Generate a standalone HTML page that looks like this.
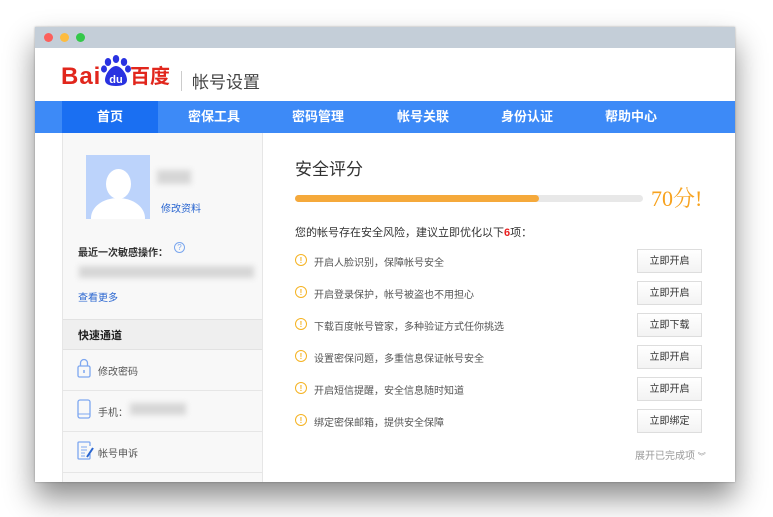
<!DOCTYPE html>
<html><head><meta charset="utf-8"><style>
*{margin:0;padding:0;box-sizing:border-box}
body{width:773px;height:517px;background:#fff;position:relative;overflow:hidden;font-family:"Liberation Sans","Noto Sans CJK SC",sans-serif;color:#333}
.a{position:absolute;white-space:nowrap}
#win{position:absolute;left:35px;top:27px;width:700px;height:455px;background:#fff;box-shadow:0 16px 28px rgba(0,0,0,.45),0 0 2px rgba(0,0,0,.3);overflow:hidden}
.dot{position:absolute;top:6px;width:9px;height:9px;border-radius:50%}
.nav{position:absolute;top:74px;left:0;width:700px;height:32px;background:#3d8af7}
.nav span{position:absolute;top:0;height:32px;line-height:32px;width:104px;text-align:center;color:#fff;font-size:13px;font-weight:bold}
.row{position:absolute;left:260px;width:420px;height:24px}
.ic{position:absolute;left:0;top:5px;width:12px;height:12px;border:1.5px solid #f5b323;border-radius:50%;color:#f5b323;font-size:8px;display:flex;align-items:center;justify-content:center;font-weight:bold}
.rt{position:absolute;left:19px;top:5px;font-size:10px;color:#555}
.btn{position:absolute;left:342px;top:0;width:65px;height:24px;border:1px solid #ddd;background:linear-gradient(#fff,#f3f3f3);font-size:10px;color:#333;text-align:center;line-height:23px}
.qi{position:absolute;left:27px;width:200px;height:41px;border-bottom:1px solid #e6e6e6}
</style></head><body>
<div id="win">
<div class="a" style="left:0;top:0;width:700px;height:21px;background:#c4ced8"></div>
<div class="dot" style="left:9px;background:#fc605c"></div>
<div class="dot" style="left:25px;background:#fdbc40"></div>
<div class="dot" style="left:41px;background:#34c84a"></div>
<!-- logo -->
<div class="a" style="left:26px;top:36px;font-size:24px;font-weight:bold;color:#e1261c;letter-spacing:1px">Bai</div>
<svg class="a" style="left:64px;top:27px" width="34" height="34" viewBox="0 0 34 34">
<ellipse cx="9" cy="8" rx="3.2" ry="4" fill="#2932e1"/><ellipse cx="17" cy="5" rx="3.2" ry="4" fill="#2932e1"/>
<ellipse cx="25" cy="8" rx="3.2" ry="4" fill="#2932e1"/><ellipse cx="29" cy="15" rx="3" ry="3.6" fill="#2932e1"/>
<ellipse cx="5" cy="15" rx="3" ry="3.6" fill="#2932e1"/>
<path d="M17 12c-5 0-11 8-11 14 0 4 4 6 11 6s11-2 11-6c0-6-6-14-11-14z" fill="#2932e1"/>
<text x="17" y="29" font-size="11" font-weight="bold" fill="#fff" text-anchor="middle" font-family="Liberation Sans">du</text>
</svg>
<div class="a" style="left:95px;top:39px;font-size:20px;font-weight:bold;color:#e1261c;line-height:22px">百度</div>
<div class="a" style="left:146px;top:44px;width:1px;height:20px;background:#ccc"></div>
<div class="a" style="left:157px;top:41px;font-size:17px;color:#444">帐号设置</div>
<div class="nav">
<span style="left:27px;width:96px;background:#1a6ff2">首页</span>
<span style="left:127px">密保工具</span>
<span style="left:231px">密码管理</span>
<span style="left:336px">帐号关联</span>
<span style="left:440px">身份认证</span>
<span style="left:544px">帮助中心</span>
</div>
<!-- sidebar -->
<div class="a" style="left:27px;top:106px;width:201px;height:360px;background:#f8f8f8;border-left:1px solid #e6e6e6;border-right:1px solid #e6e6e6"></div>
<div class="a" style="left:51px;top:128px;width:64px;height:64px;background:#bcd3fb;overflow:hidden">
<div class="a" style="left:20px;top:14px;width:25px;height:30px;border-radius:50%;background:#fff"></div>
<div class="a" style="left:5px;top:43px;width:54px;height:40px;border-radius:50%;background:#fff"></div>
</div>
<div class="a" style="left:122px;top:143px;width:34px;height:14px;background:#d6d6d6;filter:blur(3px)"></div>
<div class="a" style="left:126px;top:173px;font-size:10px;color:#2a66d0">修改资料</div>
<div class="a" style="left:43px;top:217px;font-size:10px;font-weight:bold;color:#333">最近一次敏感操作：</div>
<div class="a" style="left:139px;top:215px;width:11px;height:11px;border:1px solid #7aa6ee;border-radius:50%;font-size:8px;color:#7aa6ee;text-align:center;line-height:9px">?</div>
<div class="a" style="left:44px;top:239px;width:175px;height:12px;background:#d6d6d6;filter:blur(3px)"></div>
<div class="a" style="left:43px;top:262px;font-size:10px;color:#2a66d0">查看更多</div>
<div class="a" style="left:28px;top:292px;width:199px;height:31px;background:#efefef;border-top:1px solid #e2e2e2;border-bottom:1px solid #e2e2e2"></div>
<div class="a" style="left:43px;top:300px;font-size:11px;font-weight:bold;color:#222">快速通道</div>
<div class="qi" style="top:323px;left:28px;width:199px"></div>
<div class="qi" style="top:364px;left:28px;width:199px"></div>
<div class="qi" style="top:405px;left:28px;width:199px"></div>
<svg class="a" style="left:42px;top:331px" width="14" height="20" viewBox="0 0 14 20"><path d="M3.5 8V5a3.5 3.5 0 0 1 7 0v3" fill="none" stroke="#7ea7f0" stroke-width="1.3"/><rect x="1" y="8" width="12" height="11" rx="1.5" fill="none" stroke="#7ea7f0" stroke-width="1.3"/><path d="M7 12v3" stroke="#7ea7f0" stroke-width="1.5"/></svg>
<div class="a" style="left:63px;top:336px;font-size:10px;color:#555">修改密码</div>
<svg class="a" style="left:42px;top:372px" width="14" height="20" viewBox="0 0 14 20"><rect x="1" y="1" width="12" height="18" rx="2" fill="none" stroke="#7ea7f0" stroke-width="1.3"/><path d="M1 15h12" stroke="#7ea7f0" stroke-width="1"/></svg>
<div class="a" style="left:63px;top:377px;font-size:10px;color:#555">手机：</div>
<div class="a" style="left:95px;top:376px;width:56px;height:12px;background:#d6d6d6;filter:blur(3px)"></div>
<svg class="a" style="left:42px;top:414px" width="18" height="19" viewBox="0 0 18 19"><path d="M13 5V2a1 1 0 0 0-1-1H2a1 1 0 0 0-1 1v15a1 1 0 0 0 1 1h10a1 1 0 0 0 1-1v-4" fill="none" stroke="#7ea7f0" stroke-width="1.3"/><path d="M4 6h6M4 9h6M4 12h4M4 15h4" stroke="#7ea7f0" stroke-width="1.1"/><path d="M10 16l6-9" stroke="#2a66d0" stroke-width="2"/></svg>
<div class="a" style="left:63px;top:418px;font-size:10px;color:#555">帐号申诉</div>
<!-- content -->
<div class="a" style="left:260px;top:128px;font-size:17px;color:#333">安全评分</div>
<div class="a" style="left:260px;top:168px;width:348px;height:7px;border-radius:4px;background:#e8e8e8"></div>
<div class="a" style="left:260px;top:168px;width:244px;height:7px;border-radius:4px;background:#f5a93b"></div>
<div class="a" style="left:616px;top:155px;font-size:22px;color:#f7a21e;font-family:'Liberation Serif','Noto Serif CJK SC',serif">70分!</div>
<div class="a" style="left:260px;top:197px;font-size:11px;color:#333">您的帐号存在安全风险，建议立即优化以下<b style="color:#e81f1f">6</b>项：</div>
<div class="row" style="top:222px"><div class="ic">!</div><div class="rt">开启人脸识别，保障帐号安全</div><div class="btn">立即开启</div></div>
<div class="row" style="top:254px"><div class="ic">!</div><div class="rt">开启登录保护，帐号被盗也不用担心</div><div class="btn">立即开启</div></div>
<div class="row" style="top:286px"><div class="ic">!</div><div class="rt">下载百度帐号管家，多种验证方式任你挑选</div><div class="btn">立即下载</div></div>
<div class="row" style="top:318px"><div class="ic">!</div><div class="rt">设置密保问题，多重信息保证帐号安全</div><div class="btn">立即开启</div></div>
<div class="row" style="top:350px"><div class="ic">!</div><div class="rt">开启短信提醒，安全信息随时知道</div><div class="btn">立即开启</div></div>
<div class="row" style="top:382px"><div class="ic">!</div><div class="rt">绑定密保邮箱，提供安全保障</div><div class="btn">立即绑定</div></div>
<div class="a" style="left:600px;top:420px;font-size:10px;color:#999">展开已完成项 <span style="font-size:8px">︾</span></div>
</div>
</body></html>
